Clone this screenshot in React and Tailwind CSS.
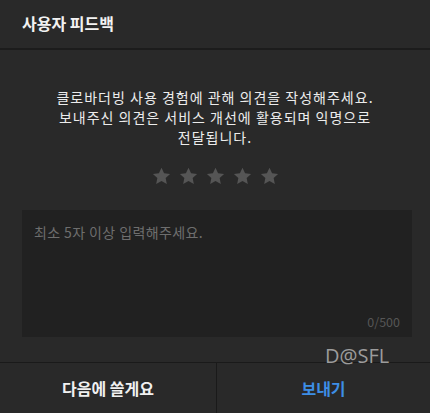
import React from "react";

const Star = () => (
  <svg width="19" height="18" viewBox="0 0 24 23" className="block">
    <path
      d="M12 0.8l3.3 7.1 7.7.9-5.7 5.3 1.5 7.7L12 17.9l-6.8 3.9 1.5-7.7L1 8.8l7.7-.9z"
      fill="#555555"
    />
  </svg>
);

export default function App() {
  const font = { fontFamily: '"Noto Sans CJK KR", "Noto Sans", sans-serif' };
  return (
    <div
      className="relative w-[430px] h-[413px] bg-[#292929] flex flex-col overflow-hidden"
      style={font}
    >
      <div className="h-[50px] shrink-0 border-b-2 border-[#1c1c1c] flex items-center px-[22px]">
        <span className="text-[16px] font-bold text-[#f2f2f2] leading-none -mt-[3px]">
          사용자 피드백
        </span>
      </div>
      <div className="flex-1 flex flex-col items-center pt-[37px]">
        <p className="text-[14px] leading-[20px] tracking-[1px] text-[#ececec] text-center">
          클로바더빙 사용 경험에 관해 의견을 작성해주세요.
          <br />
          보내주신 의견은 서비스 개선에 활용되며 익명으로
          <br />
          전달됩니다.
        </p>
        <div className="flex gap-[8px] mt-[20px]">
          <Star />
          <Star />
          <Star />
          <Star />
          <Star />
        </div>
        <div className="mt-[25px] self-start ml-[22px] w-[390px] h-[127px] bg-[#212121] relative px-[12px] pt-[13px]">
          <div className="text-[14px] leading-[18px] tracking-[0.4px] text-[#6e6e6e]">
            최소 5자 이상 입력해주세요.
          </div>
          <div className="absolute right-[12px] bottom-[9px] text-[12.5px] leading-none text-[#565656]">
            0/500
          </div>
        </div>
      </div>
      <div className="h-[51px] shrink-0 border-t border-[#1a1a1a] flex">
        <div className="w-[217px] flex items-center justify-center border-r border-[#1a1a1a]">
          <span className="text-[16px] font-bold text-[#f0f0f0]">다음에 쓸게요</span>
        </div>
        <div className="flex-1 flex items-center justify-center">
          <span className="text-[16px] font-bold text-[#3d8ee6]">보내기</span>
        </div>
      </div>
      <div
        className="absolute left-[325px] top-[344px] text-[20px] leading-[24px] text-[#9c9c9c]"
        style={{ fontFamily: '"Open Sans", "Noto Sans", sans-serif' }}
      >
        D@SFL
      </div>
    </div>
  );
}
